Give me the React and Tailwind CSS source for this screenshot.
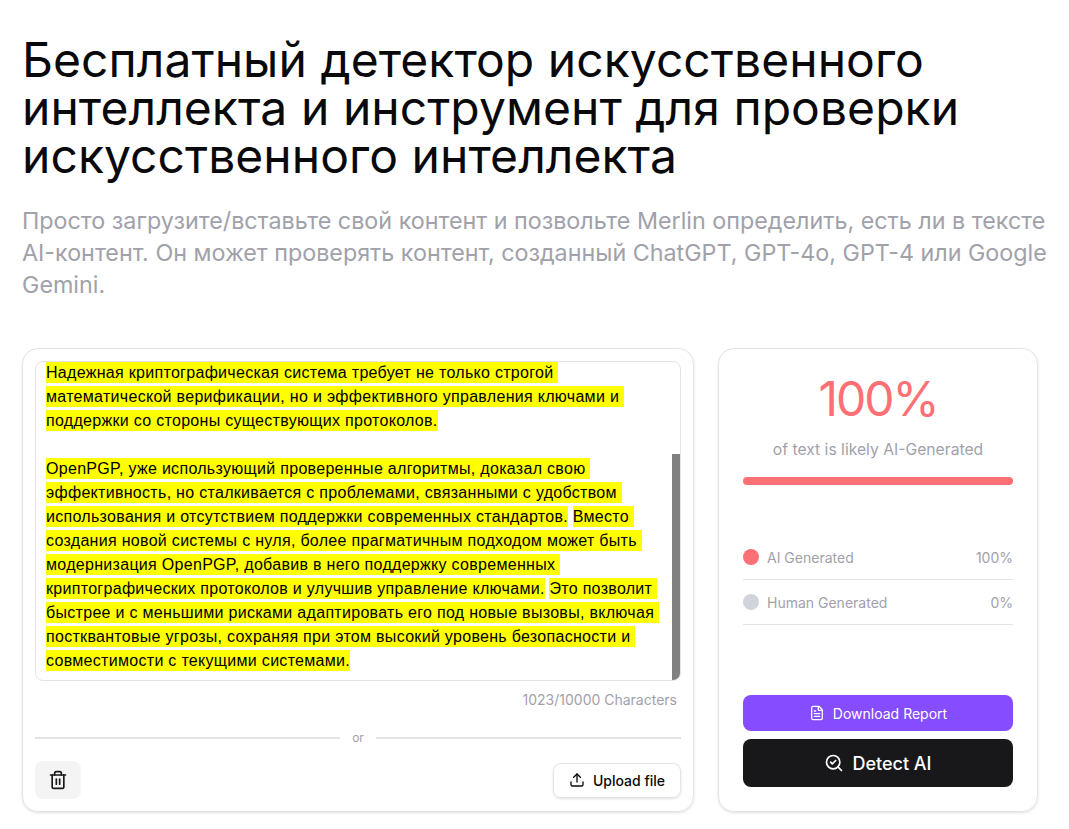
import { FileText, Trash2, Upload, SearchCheck } from 'lucide-react';

const sans = "font-['Inter',sans-serif]";

function Mark({ children }) {
  return <span className="bg-[#ffff00] py-[2px]">{children}</span>;
}

function StatRow({ dot, label, value }) {
  return (
    <div className="flex items-center h-[45px] border-b border-[#e4e4e7] text-[14px] text-[#a1a1aa]">
      <span className={`w-4 h-4 rounded-full mr-2 ${dot}`}></span>
      <span>{label}</span>
      <span className="ml-auto">{value}</span>
    </div>
  );
}

export default function App() {
  return (
    <div className={`${sans} bg-white w-[1069px] h-[829px] overflow-hidden pl-[22px] pt-[36px]`}>
      <h1 className="text-[48px] leading-[48px] text-[#09090b] w-[1000px] tracking-[0.05px]">
        Бесплатный детектор искусственного интеллекта и инструмент для проверки искусственного интеллекта
      </h1>
      <p className="mt-[25px] text-[23.3px] leading-[32px] text-[#a1a1aa] w-[1030px]">
        Просто загрузите/вставьте свой контент и позвольте Merlin определить, есть ли в тексте AI-контент. Он может проверять контент, созданный ChatGPT, GPT-4o, GPT-4 или Google Gemini.
      </p>

      <div className="flex gap-6 mt-[47px]">
        {/* Editor card */}
        <div className="w-[672px] h-[464px] rounded-2xl border border-[#e4e4e7] shadow-sm p-3 flex flex-col">
          <div className="relative h-[323px] rounded-lg border border-[#e4e4e7] overflow-hidden pl-[10px] pr-[20px]">
            <div className="font-['Liberation_Sans',sans-serif] text-[16px] leading-[24px] tracking-[0.3px] text-black whitespace-pre-wrap -mt-[1px]">
              <Mark>Надежная криптографическая система требует не только строгой математической верификации, но и эффективного управления ключами и поддержки со стороны существующих протоколов.</Mark>
              {'\n\n'}
              <Mark>OpenPGP, уже использующий проверенные алгоритмы, доказал свою эффективность, но сталкивается с проблемами, связанными с удобством использования и отсутствием поддержки современных стандартов.</Mark>{' '}
              <Mark>Вместо создания новой системы с нуля, более прагматичным подходом может быть модернизация OpenPGP, добавив в него поддержку современных криптографических протоколов и улучшив управление ключами.</Mark>{' '}
              <Mark>Это позволит быстрее и с меньшими рисками адаптировать его под новые вызовы, включая постквантовые угрозы, сохраняя при этом высокий уровень безопасности и совместимости с текущими системами.</Mark>
            </div>
            <div className="absolute right-0 bottom-0 w-2 h-[226px] bg-[#808080]"></div>
          </div>
          <div className="text-right text-[14px] leading-[20px] text-[#a1a1aa] mt-[9px] pr-1">1023/10000 Characters</div>
          <div className="flex items-center gap-3 mt-[19px] text-[12px] leading-[18px] text-[#a1a1aa]">
            <div className="flex-1 h-[2px] bg-[#e4e4e7]"></div>
            <span>or</span>
            <div className="flex-1 h-[2px] bg-[#e4e4e7]"></div>
          </div>
          <div className="flex items-center justify-between mt-[14px]">
            <button className="w-[46px] h-[38px] rounded-lg bg-[#f4f4f5] flex items-center justify-center text-[#18181b]">
              <Trash2 size={20} />
            </button>
            <button className="h-[35px] w-[128px] rounded-lg border border-[#e4e4e7] shadow-sm flex items-center justify-center gap-2 text-[14px] font-medium text-[#09090b]">
              <Upload size={16} />
              Upload file
            </button>
          </div>
        </div>

        {/* Result card */}
        <div className="w-[320px] h-[464px] rounded-2xl border border-[#e4e4e7] shadow-sm px-6 flex flex-col">
          <div className="text-center text-[48px] leading-[48px] tracking-[-2px] text-[#fb7074] mt-[26px]">100%</div>
          <div className="text-center text-[15.7px] leading-[24px] text-[#a1a1aa] mt-[15px]">of text is likely AI-Generated</div>
          <div className="h-2 rounded-full bg-[#fb7074] mt-[15px]"></div>
          <div className="mt-[50px]">
            <StatRow dot="bg-[#fb7074]" label="AI Generated" value="100%" />
            <StatRow dot="bg-[#d1d5db]" label="Human Generated" value="0%" />
          </div>
          <button className="mt-[70px] h-[36px] rounded-lg bg-[#864cff] text-white text-[14px] flex items-center justify-center gap-2">
            <FileText size={16} />
            Download Report
          </button>
          <button className="mt-2 h-[48px] rounded-lg bg-[#18181b] text-white text-[18px] font-medium flex items-center justify-center gap-2">
            <SearchCheck size={20} />
            Detect AI
          </button>
        </div>
      </div>
    </div>
  );
}
